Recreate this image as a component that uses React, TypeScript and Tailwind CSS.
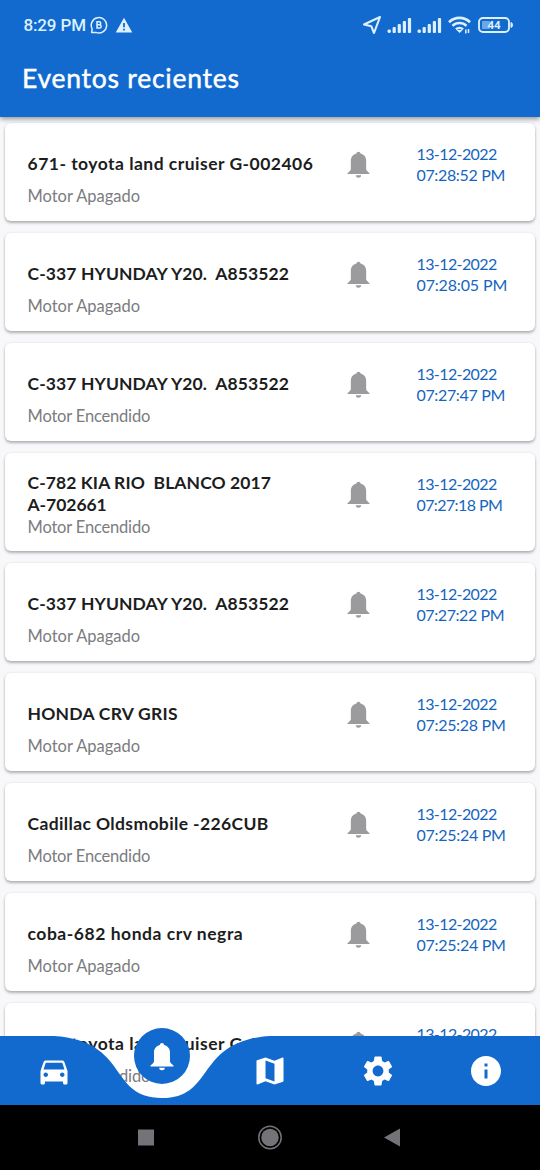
import { MdDirectionsCar, MdMap, MdSettings, MdInfo } from "react-icons/md";

type Line = { text: string; tracking: string };
type EventItem = { title: Line[]; status: string; time: string; timeTracking: string };

const ENC = "Motor Encendido";
const APA = "Motor Apagado";

const toyota: Line[] = [{ text: "671- toyota land cruiser G-002406", tracking: "tracking-[0.48px]" }];
const hyunday: Line[] = [{ text: "C-337 HYUNDAY Y20.  A853522", tracking: "tracking-[0.1px]" }];
const kia: Line[] = [
  { text: "C-782 KIA RIO  BLANCO 2017", tracking: "tracking-[0.08px]" },
  { text: "A-702661", tracking: "tracking-[-0.05px]" },
];

const events: EventItem[] = [
  { title: toyota, status: APA, time: "07:28:52 PM", timeTracking: "tracking-[-0.35px]" },
  { title: hyunday, status: APA, time: "07:28:05 PM", timeTracking: "tracking-[-0.15px]" },
  { title: hyunday, status: ENC, time: "07:27:47 PM", timeTracking: "tracking-[-0.35px]" },
  { title: kia, status: ENC, time: "07:27:18 PM", timeTracking: "tracking-[-0.6px]" },
  { title: hyunday, status: APA, time: "07:27:22 PM", timeTracking: "tracking-[-0.42px]" },
  { title: [{ text: "HONDA CRV GRIS", tracking: "tracking-[0.25px]" }], status: APA, time: "07:25:28 PM", timeTracking: "tracking-[-0.3px]" },
  { title: [{ text: "Cadillac Oldsmobile -226CUB", tracking: "tracking-[0.37px]" }], status: ENC, time: "07:25:24 PM", timeTracking: "tracking-[-0.28px]" },
  { title: [{ text: "coba-682 honda crv negra", tracking: "tracking-[0.53px]" }], status: APA, time: "07:25:24 PM", timeTracking: "tracking-[-0.28px]" },
  { title: toyota, status: ENC, time: "07:25:10 PM", timeTracking: "tracking-[-0.3px]" },
];

function Bell({ className }: { className: string }) {
  return (
    <svg viewBox="0 0 24 28" className={className} fill="currentColor">
      <path d="M12 .6c1.200 0 2 .8 2.200 2C17.700 3.500 20 6.400 20 10v8.400c0 1.500.8 2 2 3.300.800.700 1.500 1 1.500 1.800v.500H.5v-.500c0-.8.7-1.100 1.500-1.800 1.200-1.300 2-1.800 2-3.300V10C4 6.400 6.300 3.500 9.800 2.600 10 1.400 10.800.6 12 .6z" />
      <path d="M9.200 25.200h5.600a2.800 2.500 0 0 1-5.600 0z" />
    </svg>
  );
}

function EventCard({ item }: { item: EventItem }) {
  const two = item.title.length > 1;
  return (
    <li className="flex h-[98px] shrink-0 rounded-[6px] bg-white pl-[22.5px] shadow-[0_2px_3px_rgba(0,0,0,0.28),0_0_3px_rgba(0,0,0,0.08)]">
      <div className={two ? "w-[319px] pt-[19px]" : "w-[319px] pt-[30px]"}>
        <div className="whitespace-pre text-[17.5px] font-bold leading-[22px] text-[#1c1d20]">
          {item.title.map((line) => (
            <div key={line.text} className={line.tracking}>{line.text}</div>
          ))}
        </div>
        <div
          className={`text-[16.5px] leading-[22px] text-[#7b7c80] ${two ? "mt-0" : "mt-[10px]"} ${
            item.status === ENC ? "tracking-[-0.18px]" : "tracking-[-0.02px]"
          }`}
        >
          {item.status}
        </div>
      </div>
      <Bell className="mt-[28px] h-[27px] w-[23px] shrink-0 text-[#9b9b9e]" />
      <div className="ml-[47px] whitespace-nowrap pt-[21px] text-[16px] leading-[20.5px] text-[#1565c0]">
        <div className="tracking-[-0.6px]">13-12-2022</div>
        <div className={item.timeTracking}>{item.time}</div>
      </div>
    </li>
  );
}

function Signal() {
  return (
    <svg viewBox="0 0 25 17" className="h-[17px] w-[25px]" fill="currentColor">
      <rect x="0.5" y="12.5" width="3.4" height="3.4" rx="1.4" />
      <rect x="5.6" y="10" width="3.2" height="6" rx="1" />
      <rect x="10.7" y="7" width="3.2" height="9" rx="1" />
      <rect x="15.8" y="4" width="3.2" height="12" rx="1" />
      <rect x="20.9" y="1" width="3.2" height="15" rx="1" />
    </svg>
  );
}

export default function App() {
  return (
    <div className="flex h-[1170px] w-[540px] flex-col overflow-hidden bg-[#f8f8fa] font-[Lato,sans-serif]">
      <header className="relative z-10 h-[117px] shrink-0 bg-[#136ace] text-white shadow-[0_2px_5px_rgba(0,0,0,0.4)]">
        <div className="flex h-[50px] items-center pl-[23.5px] pr-[27px] text-[#dcf0ff]">
          <span className="font-[Roboto,sans-serif] text-[17px] font-medium leading-5 tracking-[-0.15px]">8:29 PM</span>
          <svg viewBox="0 0 18 18" className="ml-[4px] size-[18px]" fill="none" stroke="currentColor" strokeWidth="1.5">
            <path d="M1.600 16.400 2.200 13A7.700 7.700 0 1 1 6 16.400z" strokeLinejoin="round" />
            <path d="M7 5.700v6.400h2.500a1.700 1.700 0 0 0 0-3.400H7h2.200a1.500 1.500 0 0 0 0-3H7z" />
          </svg>
          <svg viewBox="0 0 18 16" className="ml-[7px] h-[16px] w-[18px]">
            <path d="M9 .7 17.300 15.500H.7z" fill="currentColor" />
            <path d="M9 6v4.200M9 11.800v1.800" stroke="#136ace" strokeWidth="1.800" />
          </svg>
          <div className="ml-auto flex items-center">
            <svg viewBox="0 0 20 20" className="size-[20px]" fill="none" stroke="currentColor" strokeWidth="2.100" strokeLinejoin="round">
              <path d="M18 2 12 18 9.300 11.200 2 9.500z" />
            </svg>
            <div className="ml-[5px]"><Signal /></div>
            <div className="ml-[5px]"><Signal /></div>
            <svg viewBox="0 0 24 18" className="ml-[6px] h-[18px] w-[24px]" fill="none" stroke="currentColor" strokeWidth="2.600">
              <path d="M1 6.200a15 15 0 0 1 21 0M4.500 9.900a10 10 0 0 1 14 0M8 13.400a5 5 0 0 1 7 0" />
              <path d="m8.600 14 3 3 3-3z" fill="currentColor" stroke="none" />
              <path d="M17.800 13.500v4M20.500 13v4" strokeWidth="1.500" />
            </svg>
            <svg viewBox="0 0 35 16" className="ml-[6px] h-[16px] w-[35px]">
              <rect x="1" y="1" width="30" height="14" rx="4" fill="none" stroke="currentColor" strokeWidth="1.900" />
              <rect x="4" y="4" width="8" height="8" rx="1" fill="#6ba8e8" />
              <path d="M33 5.500c2 .8 2 4.200 0 5z" fill="currentColor" stroke="currentColor" />
              <text x="16" y="12.200" textAnchor="middle" fontFamily="Roboto" fontWeight="700" fontSize="11.500" fill="currentColor">44</text>
            </svg>
          </div>
        </div>
        <h1 className="pl-[22px] pt-[12px] text-[26.5px] font-normal leading-[32px] tracking-[0.75px] [-webkit-text-stroke:0.45px_white]">Eventos recientes</h1>
      </header>

      <main className="relative h-[988px] shrink-0 overflow-hidden">
        <ul className="flex flex-col gap-[12px] px-[5px] pt-[6px]">
          {events.map((e, i) => (
            <EventCard key={i} item={e} />
          ))}
        </ul>
        <nav className="absolute bottom-0 left-0 h-[77px] w-full text-white">
          <svg viewBox="0 0 540 77" className="absolute inset-0 h-full w-full">
            <path d="M0 8H54C129.600 13 108 70 162 70S194.400 13 270 8H540V77H0z" fill="#136ace" />
            <circle cx="162" cy="28" r="28" fill="#136ace" />
          </svg>
          <div className="relative grid h-full grid-cols-5 justify-items-center pt-[25px]">
            <MdDirectionsCar className="size-[36px]" />
            <Bell className="mt-[-11px] h-[29px] w-[24px]" />
            <MdMap className="size-[36px]" />
            <MdSettings className="size-[36px]" />
            <MdInfo className="size-[36px]" />
          </div>
        </nav>
      </main>

      <footer className="flex h-[65px] shrink-0 items-center bg-black">
        <svg viewBox="0 0 540 65" className="h-full w-full">
          <rect x="138" y="24.500" width="16" height="16" fill="#757377" />
          <circle cx="270" cy="32.500" r="8.700" fill="#757377" />
          <circle cx="270" cy="32.500" r="11.200" fill="none" stroke="#757377" strokeWidth="1.500" />
          <path d="M400 23.500v18l-16-9z" fill="#757377" />
        </svg>
      </footer>
    </div>
  );
}
